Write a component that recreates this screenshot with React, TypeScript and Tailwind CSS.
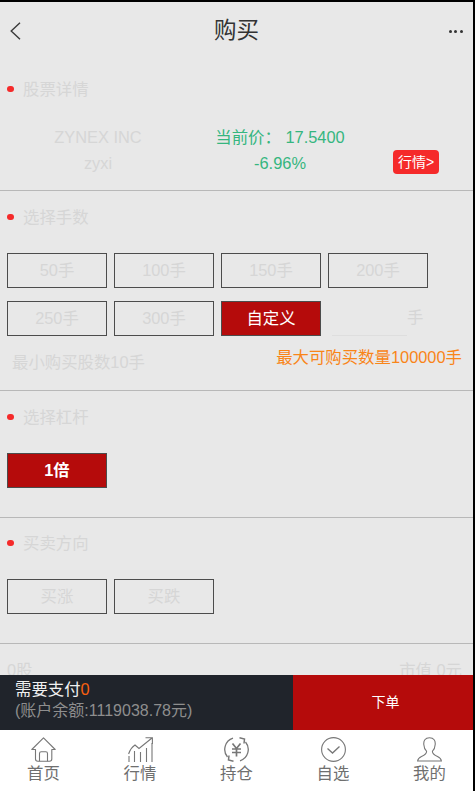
const FONT = "font-['Liberation_Sans','Noto_Sans_CJK_SC',sans-serif]";

function SectionTitle({ title }: { title: string }) {
  return (
    <div className="flex items-center h-[20px] pl-[7px] text-[16.4px] text-[#d6d6d6]">
      <span className="w-[6.5px] h-[6.5px] rounded-full bg-[#f52a2a] mr-[9.5px]" />
      {title}
    </div>
  );
}

function OptionButton({ label, active, bold }: { label: string; active?: boolean; bold?: boolean }) {
  return (
    <div
      className={`w-[100px] h-[35px] border border-[#4c4c4c] flex items-center justify-center text-[16.4px] ${
        active ? 'bg-[#b50b0b] text-white' : 'text-[#d6d6d6]'
      } ${bold ? 'font-bold' : ''}`}
    >
      {label}
    </div>
  );
}

function HomeIcon() {
  return (
    <svg width="25" height="25" viewBox="0 0 25 25" fill="none" stroke="#777" strokeWidth="1.1" strokeLinejoin="round">
      <path d="M4.5 12.5 H0.8 L12.5 0.8 L24.2 12.5 H20.8 V22 Q20.8 24.2 18.5 24.2 H6.8 Q4.5 24.2 4.5 22 Z" />
      <path d="M8.5 24.2 V16.5 Q8.5 14.8 10.2 14.8 H14.8 Q16.5 14.8 16.5 16.5 V24.2" />
    </svg>
  );
}

function ChartIcon() {
  return (
    <svg width="25" height="25" viewBox="0 0 25 25" fill="none" stroke="#777" strokeWidth="1.1">
      <path d="M0.6 17 Q2.5 11 7 8 L11 11.5 L24 1 M17.5 0.8 H24.4 V7" />
      <path d="M1 25 V19 M6.5 25 V14 M12.5 25 V15 M18.5 25 V11 M24 25 V6" />
    </svg>
  );
}

function HoldIcon() {
  return (
    <svg width="25" height="25" viewBox="0 0 25 25" fill="none" stroke="#777" strokeWidth="1.3">
      <path d="M9 1.2 A11.8 11.8 0 0 0 3.5 20" />
      <path d="M16 23.8 A11.8 11.8 0 0 0 21.5 5" />
      <path d="M15.5 0.8 L20.5 2 L20 6.5" strokeWidth="1.5" />
      <path d="M9.5 24.2 L4.5 23 L5 18.5" strokeWidth="1.5" />
      <path d="M8.5 6.5 L12.5 11.5 L16.5 6.5 M8 12 H17 M8 15.5 H17 M12.5 11.5 V19.5" strokeWidth="1.7" />
    </svg>
  );
}

function CheckIcon() {
  return (
    <svg width="25" height="25" viewBox="0 0 25 25" fill="none" stroke="#777" strokeWidth="1.1">
      <circle cx="12.5" cy="12.5" r="11.9" />
      <path d="M6.5 11.5 L11.5 16 L18.5 9.5" strokeWidth="1.3" />
    </svg>
  );
}

function UserIcon() {
  return (
    <svg width="25" height="25" viewBox="0 0 25 25" fill="none" stroke="#777" strokeWidth="1.1">
      <path d="M12.5 0.7 C8 0.7 6.5 4 6.8 7.5 C7 10.5 8 12.8 9.5 14.2 C10 16.5 7.5 18 4.5 19.5 C2.2 20.6 0.8 22 0.6 24 H24.4 C24.2 22 22.8 20.6 20.5 19.5 C17.5 18 15 16.5 15.5 14.2 C17 12.8 18 10.5 18.2 7.5 C18.5 4 17 0.7 12.5 0.7 Z" />
    </svg>
  );
}

const NAV = [
  { label: '首页', icon: <HomeIcon /> },
  { label: '行情', icon: <ChartIcon /> },
  { label: '持仓', icon: <HoldIcon /> },
  { label: '自选', icon: <CheckIcon /> },
  { label: '我的', icon: <UserIcon /> },
];

export default function App() {
  return (
    <div className={`${FONT} h-[791px] bg-black pt-[2px] pr-[2px] overflow-hidden`}>
      <div className="h-[789px] flex flex-col bg-[#e8e8e8]">
        <div className="flex-1 overflow-hidden">
          {/* 顶部标题 */}
          <div className="h-[58px] flex items-center justify-between px-[10px]">
            <span className="w-[30px]">
              <svg width="11" height="18" viewBox="0 0 11 18" fill="none" stroke="#3a3a3a" strokeWidth="1.4">
                <path d="M10 0.7 L1.2 9 L10 17.3" />
              </svg>
            </span>
            <span className="text-[22.5px] text-[#333]">购买</span>
            <span className="w-[30px] flex justify-end gap-[2.5px]">
              <i className="w-[3px] h-[3px] rounded-full bg-[#333]" />
              <i className="w-[3px] h-[3px] rounded-full bg-[#333]" />
              <i className="w-[3px] h-[3px] rounded-full bg-[#333]" />
            </span>
          </div>

          {/* 股票详情 */}
          <div className="h-[131px] pt-[19px] border-b border-[#b8b8b8]">
            <SectionTitle title="股票详情" />
            <div className="relative mt-[25px] flex text-center text-[16.4px] leading-[26px]">
              <div className="w-[196px] text-[#d6d6d6]">
                <p>ZYNEX INC</p>
                <p>zyxi</p>
              </div>
              <div className="w-[168px] text-[#35b67f]">
                <p className="whitespace-nowrap">当前价： 17.5400</p>
                <p>-6.96%</p>
              </div>
              <span className="absolute left-[393px] top-[26px] w-[46px] h-[24px] rounded-[4px] bg-[#f52a2a] text-white text-[14px] flex items-center justify-center">
                行情&gt;
              </span>
            </div>
          </div>

          {/* 选择手数 */}
          <div className="h-[200px] pt-[16px] border-b border-[#b8b8b8]">
            <SectionTitle title="选择手数" />
            <div className="mt-[26px] pl-[7px] flex flex-wrap gap-x-[7px] gap-y-[13px] w-[440px]">
              {['50手', '100手', '150手', '200手', '250手', '300手'].map((l) => (
                <OptionButton key={l} label={l} />
              ))}
              <OptionButton label="自定义" active />
              <div className="w-[75px] h-[35px] ml-[4px] text-[16.4px] text-[#d6d6d6] border-b border-[#dedede] relative">
                <span className="absolute left-[75px] top-[4px]">手</span>
              </div>
            </div>
            <div className="relative">
              <p className="pl-[12px] pt-[14px] text-[16.4px] text-[#d6d6d6]">最小购买股数10手</p>
              <p className="absolute right-[11px] top-[9px] text-[16.4px] text-[#f98518]">最大可购买数量100000手</p>
            </div>
          </div>

          {/* 选择杠杆 */}
          <div className="h-[127px] pt-[16px] border-b border-[#b8b8b8]">
            <SectionTitle title="选择杠杆" />
            <div className="mt-[26px] pl-[7px]">
              <OptionButton label="1倍" active bold />
            </div>
          </div>

          {/* 买卖方向 */}
          <div className="h-[126px] pt-[15px] border-b border-[#b8b8b8]">
            <SectionTitle title="买卖方向" />
            <div className="mt-[26px] pl-[7px] flex gap-[7px]">
              <OptionButton label="买涨" />
              <OptionButton label="买跌" />
            </div>
          </div>

          <div className="flex justify-between pl-[7px] pr-[11px] pt-[14px] text-[16.4px] text-[#d6d6d6]">
            <span>0股</span>
            <span>市值 0元</span>
          </div>
        </div>

        {/* 支付栏 */}
        <div className="h-[55px] flex bg-[#20242b]">
          <div className="w-[293px] pl-[15px] pt-[3px]">
            <p className="text-[16.4px] leading-[22px] text-[#f0f0f0]">
              需要支付<span className="text-[#f9600f]">0</span>
            </p>
            <p className="text-[16px] leading-[22px] text-[#8e8e8e] whitespace-nowrap">(账户余额:1119038.78元)</p>
          </div>
          <div className="flex-1 pl-[5px] bg-[#b50b0b] text-white text-[14px] flex items-center justify-center">下单</div>
        </div>

        {/* 底部导航 */}
        <div className="h-[61px] bg-white flex justify-between px-[13.5px] pt-[7px]">
          {NAV.map((n) => (
            <div key={n.label} className="w-[60px] flex flex-col items-center">
              {n.icon}
              <span className="text-[16.4px] leading-[20px] mt-[1px] text-[#6f6f6f]">{n.label}</span>
            </div>
          ))}
        </div>
      </div>
    </div>
  );
}
